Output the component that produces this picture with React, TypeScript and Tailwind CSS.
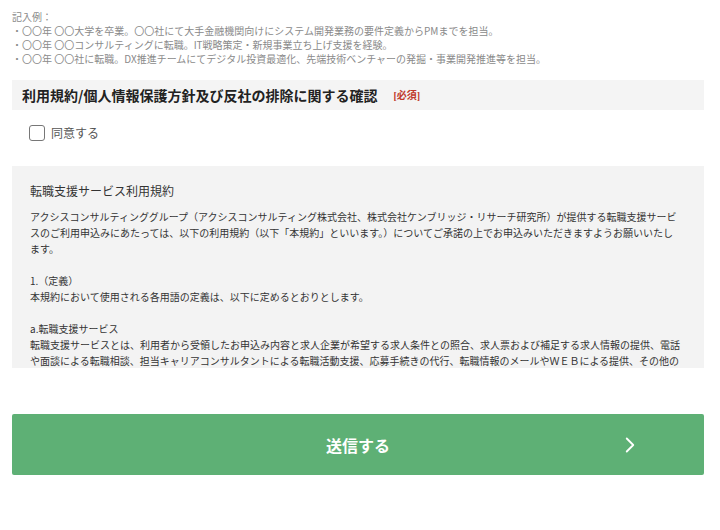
import { ChevronRight } from 'lucide-react';

const examples = [
    '・〇〇年 〇〇大学を卒業。〇〇社にて大手金融機関向けにシステム開発業務の要件定義からPMまでを担当。',
    '・〇〇年 〇〇コンサルティングに転職。IT戦略策定・新規事業立ち上げ支援を経験。',
    '・〇〇年 〇〇社に転職。DX推進チームにてデジタル投資最適化、先端技術ベンチャーの発掘・事業開発推進等を担当。',
];

function TermsBody() {
    return (
        <div className="text-[10px] leading-[16px] text-[#333]">
            <p>
                アクシスコンサルティンググループ（アクシスコンサルティング株式会社、株式会社ケンブリッジ・リサーチ研究所）が提供する転職支援サービスのご利用申込みにあたっては、以下の利用規約（以下「本規約」といいます。）についてご承諾の上でお申込みいただきますようお願いいたし
                <br />
                ます。
            </p>
            <p className="mt-[16px]">1.（定義）</p>
            <p>本規約において使用される各用語の定義は、以下に定めるとおりとします。</p>
            <p className="mt-[16px]">a.転職支援サービス</p>
            <p>
                転職支援サービスとは、利用者から受領したお申込み内容と求人企業が希望する求人条件との照合、求人票および補足する求人情報の提供、電話や面談による転職相談、担当キャリアコンサルタントによる転職活動支援、応募手続きの代行、転職情報のメールやＷＥＢによる提供、その他の転職に関するサービスをいいます。
            </p>
        </div>
    );
}

export default function App() {
    return (
        <div
            className="w-[720px] h-[530px] bg-white overflow-hidden"
            style={{ fontFamily: '"Noto Sans CJK JP", "Noto Sans", sans-serif' }}
        >
            <div className="ml-3 w-[692px]">
                <div className="pt-[10px] text-[10px] leading-[14px] text-[#8a8a8a]">
                    <p>記入例：</p>
                    {examples.map((line) => (
                        <p key={line}>{line}</p>
                    ))}
                </div>

                <div className="mt-[14px] h-[30px] bg-[#f4f4f4] flex items-center px-[10px]">
                    <h2 className="text-[14px] font-bold text-[#222]">
                        利用規約/個人情報保護方針及び反社の排除に関する確認
                    </h2>
                    <span
                        className="ml-[16px] text-[10px] font-bold text-[#c0392b]"
                        style={{ fontFamily: '"Liberation Serif", "Noto Sans CJK JP", serif' }}
                    >
                        [必須]
                    </span>
                </div>

                <label className="mt-[14px] ml-[17px] flex items-center gap-[6px]">
                    <span className="w-[16px] h-[16px] rounded-[3px] border border-[#777] bg-white" />
                    <span className="text-[12px] text-[#555]">同意する</span>
                </label>

                <div className="mt-[24px] h-[202px] overflow-hidden bg-[#f3f3f3] px-[18px] pt-[16px]">
                    <h3 className="text-[12px] leading-[18px] text-[#333]">転職支援サービス利用規約</h3>
                    <div className="mt-[9px]">
                        <TermsBody />
                    </div>
                </div>

                <button className="mt-[46px] w-full h-[61px] rounded-[2px] bg-[#5eb075] text-white relative flex items-center justify-center">
                    <span className="text-[16px] font-bold">送信する</span>
                    <ChevronRight className="absolute right-[61px] w-[26px] h-[26px]" strokeWidth={1.7} />
                </button>
            </div>
        </div>
    );
}
